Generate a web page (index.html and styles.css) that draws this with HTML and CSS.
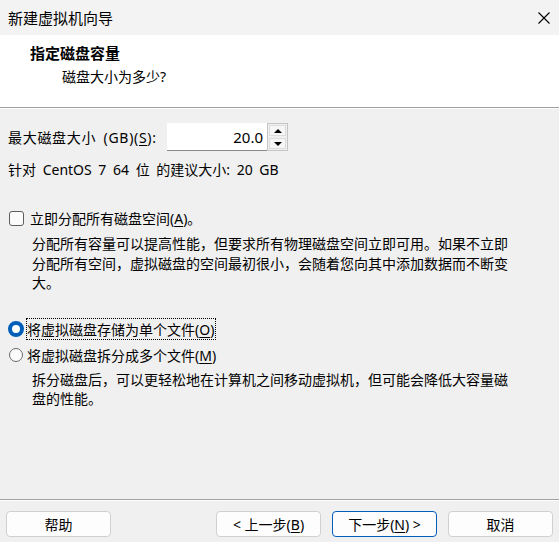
FILE: index.html
```html
<!DOCTYPE html>
<html lang="zh-CN">
  <head>
    <meta charset="UTF-8" />
    <meta name="viewport" content="width=device-width, initial-scale=1.0" />
    <title>新建虚拟机向导</title>
    <link rel="stylesheet" href="styles.css">
  </head>
  <body>
    <!-- Barra del titolo -->
    <div class="titlebar">
      <span class="title">新建虚拟机向导</span>
      <svg class="close" width="12" height="12" viewBox="0 0 12 12">
        <path d="M0.5 0.5 L11.5 11.5 M11.5 0.5 L0.5 11.5" stroke="#000" stroke-width="1.1" fill="none" />
      </svg>
    </div>

    <!-- Intestazione bianca -->
    <div class="header">
      <div class="header-title">指定磁盘容量</div>
      <div class="header-sub">磁盘大小为多少?</div>
    </div>

    <div class="content">
      <div class="size-row">
        <label for="size">最大磁盘大小 (GB)(<u>S</u>):</label>
        <div class="spin">
          <input id="size" type="text" value="20.0" />
          <div class="spin-buttons">
            <span class="spin-btn"><i class="arrow-up"></i></span>
            <span class="spin-btn"><i class="arrow-down"></i></span>
          </div>
        </div>
      </div>
      <p class="hint">针对 CentOS 7 64 位 的建议大小: 20 GB</p>

      <div class="option check-row">
        <span class="checkbox"></span>
        <span>立即分配所有磁盘空间(<u>A</u>)。</span>
      </div>
      <p class="desc">分配所有容量可以提高性能，但要求所有物理磁盘空间立即可用。如果不立即分配所有空间，虚拟磁盘的空间最初很小，会随着您向其中添加数据而不断变大。</p>

      <div class="option radio-row first">
        <span class="radio checked"></span>
        <span class="focus">将虚拟磁盘存储为单个文件(<u>O</u>)</span>
      </div>
      <div class="option radio-row">
        <span class="radio"></span>
        <span>将虚拟磁盘拆分成多个文件(<u>M</u>)</span>
      </div>
      <p class="desc second">拆分磁盘后，可以更轻松地在计算机之间移动虚拟机，但可能会降低大容量磁盘的性能。</p>
    </div>

    <!-- Pulsanti in basso -->
    <div class="footer">
      <button class="btn">帮助</button>
      <div class="spacer"></div>
      <button class="btn">&lt; 上一步(<u>B</u>)</button>
      <button class="btn default">下一步(<u>N</u>) &gt;</button>
      <button class="btn">取消</button>
    </div>
  </body>
</html>
```

FILE: styles.css
```css
html,
body {
  margin: 0;
  padding: 0;
  width: 100%;
  height: 100%;
}

body {
  display: flex;
  flex-direction: column;
  background-color: #f0f0f0;
  color: #000;
  font-family: "Noto Sans", "Noto Sans CJK SC", sans-serif;
  font-size: 14px;
  overflow: hidden;
}

u {
  text-underline-offset: 2px;
}

/* Barra del titolo */
.titlebar {
  height: 35px;
  flex: none;
  display: flex;
  align-items: center;
  justify-content: space-between;
  padding: 0 9px 0 8px;
  background-color: #f3f3f3;
  font-size: 15px;
}

.close {
  display: block;
}

/* Intestazione */
.header {
  flex: none;
  height: 73px;
  box-sizing: border-box;
  padding: 8px 0 0 30px;
  background-color: #fff;
  border-bottom: 1px solid #a0a0a0;
  box-shadow: 0 1px 0 #fff;
}

.header-title {
  font-weight: bold;
  font-size: 15px;
  line-height: 20px;
}

.header-sub {
  margin-top: 4px;
  padding-left: 32px;
  line-height: 20px;
}

/* Contenuto */
.content {
  padding: 15px 8px 0 8px;
}

.size-row {
  display: flex;
  align-items: center;
  height: 28px;
}

.size-row label {
  width: 159px;
  letter-spacing: 0.7px;
  word-spacing: 3px;
}

.spin {
  display: flex;
  height: 28px;
}

.spin input {
  width: 100px;
  height: 28px;
  box-sizing: border-box;
  border: none;
  border-bottom: 1px solid #8a8a8a;
  background-color: #fff;
  text-align: right;
  padding: 0 4px 0 0;
  font-family: inherit;
  font-size: 15px;
  color: #000;
  outline: none;
}

.spin-buttons {
  display: flex;
  flex-direction: column;
  width: 21px;
  border: 1px solid #c4c4c4;
  box-sizing: border-box;
  background-color: #f0f0f0;
}

.spin-btn {
  flex: 1;
  display: flex;
  align-items: center;
  justify-content: center;
  margin: 1px;
  background-color: #f6f6f6;
  border: 1px solid #dcdcdc;
}

.arrow-up {
  width: 0;
  height: 0;
  border-left: 4px solid transparent;
  border-right: 4px solid transparent;
  border-bottom: 4px solid #000;
}

.arrow-down {
  width: 0;
  height: 0;
  border-left: 4px solid transparent;
  border-right: 4px solid transparent;
  border-top: 4px solid #000;
}

.hint {
  margin: 9px 0 0 0;
  line-height: 20px;
  word-spacing: 3px;
}

.option {
  display: flex;
  align-items: center;
  height: 20px;
}

.check-row {
  margin-top: 28px;
}

.checkbox {
  width: 13px;
  height: 13px;
  margin: 0 6px 0 1px;
  border: 1px solid #5d5d5d;
  border-radius: 3px;
  background-color: #fbfbfb;
}

.desc {
  width: 482px;
  margin: 6px 0 0 24px;
  line-height: 19.5px;
}

.radio-row.first {
  margin-top: 26px;
}

.radio-row {
  margin-top: 6px;
}

.radio {
  width: 14px;
  height: 14px;
  margin: 0 4px 0 1px;
  border: 1px solid #6a6a6a;
  border-radius: 50%;
  background-color: #fbfbfb;
  box-sizing: border-box;
  flex: none;
}

.radio.checked {
  border: 4px solid #005fb8;
  background-color: #fff;
  width: 16px;
  height: 16px;
  margin: 0 3px 0 0;
}

.focus {
  outline: 1px dotted #000;
  outline-offset: 0;
  padding-right: 1px;
}

.desc.second {
  margin-top: 5px;
}

/* Pulsanti */
.footer {
  margin-top: auto;
  display: flex;
  gap: 11px;
  padding: 11px 6px 5px 6px;
  border-top: 1px solid #a0a0a0;
  box-shadow: inset 0 1px 0 #fff;
}

.spacer {
  flex: 1;
}

.btn {
  width: 105px;
  height: 26px;
  padding: 0;
  border: 1px solid #d0d0d0;
  border-radius: 4px;
  background-color: #fdfdfd;
  font-family: inherit;
  font-size: 14px;
  color: #000;
}

.btn.default {
  border-color: #005fb8;
}
```
